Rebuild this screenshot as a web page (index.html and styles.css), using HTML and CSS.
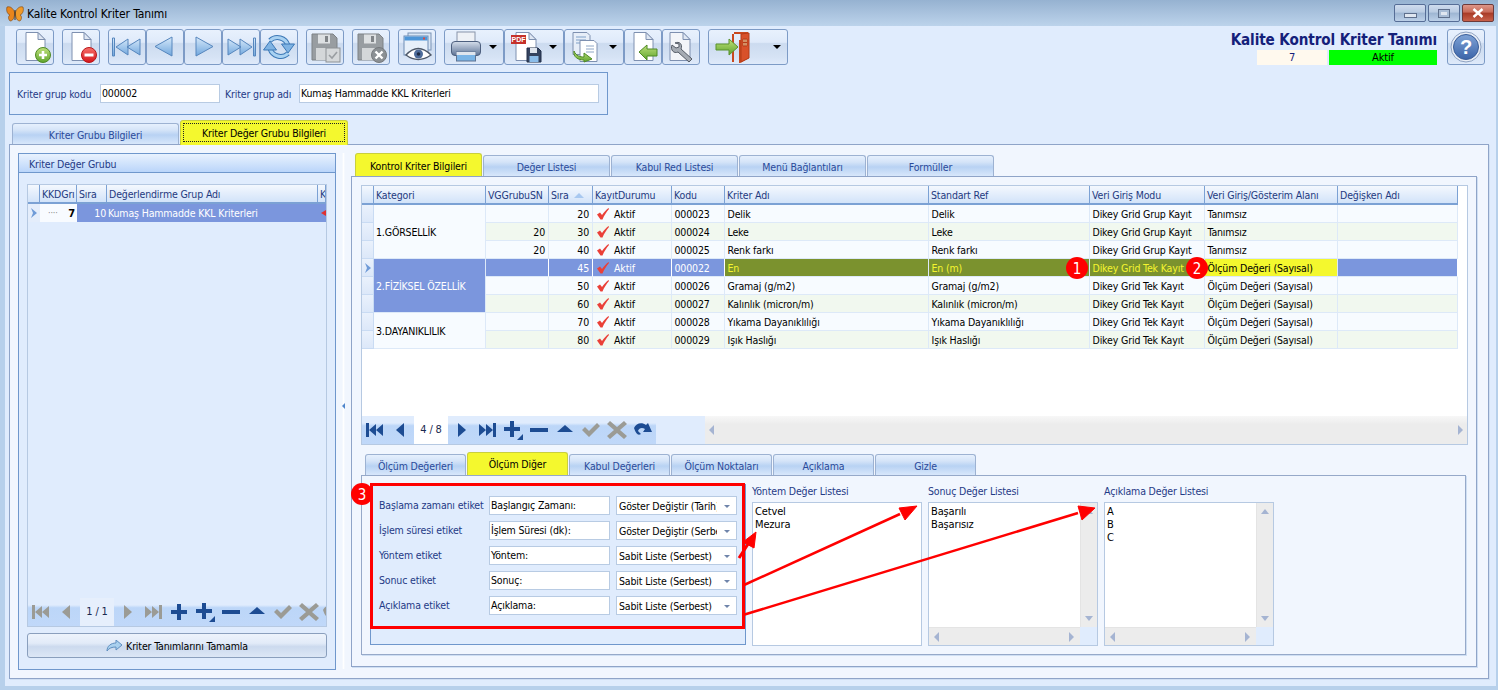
FILE: index.html
```html
<!DOCTYPE html>
<html lang="tr">
<head>
<meta charset="utf-8">
<title>Kalite Kontrol Kriter Tanımı</title>
<link rel="stylesheet" href="styles.css">
</head>
<body>
<svg class="defs" width="0" height="0">
  <defs>
    <linearGradient id="gblue" x1="0" y1="0" x2="0" y2="1"><stop offset="0" stop-color="#d7e9fa"/><stop offset="1" stop-color="#6fa6dd"/></linearGradient>
    <linearGradient id="ggreen" x1="0" y1="0" x2="0" y2="1"><stop offset="0" stop-color="#bfe07a"/><stop offset="1" stop-color="#5fa52e"/></linearGradient>
    <linearGradient id="gred" x1="0" y1="0" x2="0" y2="1"><stop offset="0" stop-color="#f8706a"/><stop offset="1" stop-color="#d4141a"/></linearGradient>
    <linearGradient id="ghelp" x1="0" y1="0" x2="0" y2="1"><stop offset="0" stop-color="#7fa3d6"/><stop offset="1" stop-color="#3b64a8"/></linearGradient>
    <linearGradient id="gprint" x1="0" y1="0" x2="0" y2="1"><stop offset="0" stop-color="#d5deeb"/><stop offset="1" stop-color="#5d7396"/></linearGradient>
    <symbol id="doc" viewBox="0 0 32 32"><path d="M7 1.500h12l7 7v21H7z" fill="#fff" stroke="#7e90b0"/><path d="M19 1.500v7h7z" fill="#dfe7f3" stroke="#7e90b0"/></symbol>
    <symbol id="i-new" viewBox="0 0 32 32"><use href="#doc"/><circle cx="24" cy="24" r="7.500" fill="url(#ggreen)" stroke="#4f8a24"/><path d="M20 24h8M24 20v8" stroke="#fff" stroke-width="2.600"/></symbol>
    <symbol id="i-del" viewBox="0 0 32 32"><use href="#doc"/><circle cx="24" cy="24" r="7.500" fill="url(#gred)" stroke="#b81418"/><path d="M19.500 24h9" stroke="#fff" stroke-width="3"/></symbol>
    <symbol id="i-first" viewBox="0 0 32 32"><path d="M1.500 7h2v18h-2zM5 16L17 8v16zM16 16L29 8v16z" fill="url(#gblue)" stroke="#5686bd"/></symbol>
    <symbol id="i-prev" viewBox="0 0 32 32"><path d="M6 15.500L23 6v19z" fill="url(#gblue)" stroke="#5686bd"/></symbol>
    <symbol id="i-next" viewBox="0 0 32 32"><path d="M26 15.500L9 6v19z" fill="url(#gblue)" stroke="#5686bd"/></symbol>
    <symbol id="i-last" viewBox="0 0 32 32"><path d="M30.500 7h-2v18h2zM27 16L15 8v16zM16 16L3 8v16z" fill="url(#gblue)" stroke="#5686bd"/></symbol>
    <symbol id="i-refresh" viewBox="0 0 32 32"><g id="rf"><path d="M7 9.500a11 11 0 0 1 18 5" fill="none" stroke="#3c78b6" stroke-width="5"/><path d="M7 9.500a11 11 0 0 1 18 5" fill="none" stroke="#a9d2f2" stroke-width="3"/><path d="M18.500 13h13L25 22z" fill="#7fb3e3" stroke="#3c78b6"/></g><use href="#rf" transform="rotate(180 16 16)"/></symbol>
    <symbol id="floppy" viewBox="0 0 32 32"><path d="M3 3h21l4 4v22H3z" fill="#989da1" stroke="#7d8185"/><rect x="9" y="3.500" width="12" height="9" fill="#dde0e2"/><rect x="16" y="5" width="3" height="6" fill="#808488"/><rect x="7" y="17" width="17" height="12" fill="#d4d7d9"/></symbol>
    <symbol id="i-savecheck" viewBox="0 0 32 32"><use href="#floppy"/><rect x="17" y="17" width="14" height="14" fill="#d5d8da" stroke="#8d9296"/><path d="M20 24l3 3 5-6" fill="none" stroke="#9a9ea2" stroke-width="1.600"/></symbol>
    <symbol id="i-savex" viewBox="0 0 32 32"><use href="#floppy"/><circle cx="24" cy="24" r="7.500" fill="#8b9094" stroke="#75797d"/><path d="M20.500 20.500l7 7M27.500 20.500l-7 7" stroke="#fff" stroke-width="2.400"/></symbol>
    <symbol id="i-preview" viewBox="0 0 32 32"><rect x="7" y="2" width="23" height="17" fill="#d8e6f5" stroke="#7b93b5"/><rect x="3" y="5" width="24" height="19" fill="#e7f0fa" stroke="#6f8cb3"/><rect x="3.500" y="5.500" width="23" height="4" fill="#4e96d8"/><rect x="22" y="6.500" width="2" height="2" fill="#e14a3c"/><path d="M5 24Q17 11 30 24Q17 33 5 24z" fill="#fff" stroke="#4d5868" stroke-width="1.400"/><circle cx="17.500" cy="23" r="4.500" fill="#4e6c9a"/><circle cx="17.500" cy="23" r="1.800" fill="#1f2c44"/></symbol>
    <symbol id="i-print" viewBox="0 0 32 32"><rect x="7" y="1" width="18" height="11" fill="#eef1f6" stroke="#8894aa"/><rect x="1.500" y="10.500" width="29" height="14" rx="3.500" fill="url(#gprint)" stroke="#4d5f7e"/><rect x="6.500" y="21" width="19" height="9" fill="#7ab4e6" stroke="#5f7392"/><rect x="6.500" y="21" width="19" height="3" fill="#dfe5ee"/></symbol>
    <symbol id="i-pdf" viewBox="0 0 32 32"><path d="M6 1.500h13l7 7v21H6z" fill="#fff" stroke="#7e90b0"/><path d="M19 1.500v7h7z" fill="#dfe7f3" stroke="#7e90b0"/><rect x="1" y="4" width="15" height="9" fill="#c5312a"/><text x="8.500" y="11.200" class="pdf-t">PDF</text><path d="M17 17h11l3 3v11H17z" fill="#34435f" stroke="#22304a"/><rect x="20" y="17" width="7" height="5" fill="#dfe5ee"/><rect x="19.500" y="25" width="9" height="6" fill="#8bbdea"/></symbol>
    <symbol id="i-copy" viewBox="0 0 32 32"><path d="M3 1.500h14l3 3v19H3z" fill="#e7eef8" stroke="#7e90b0"/><path d="M6 6h10M6 9h10M6 12h10" stroke="#7fa0c8"/><path d="M10 9.500h14l3 3v18H10z" fill="#fff" stroke="#7e90b0"/><path d="M16 15h8M16 18h8M16 21h8" stroke="#8ea6c6"/><path d="M4 20c2 5 6 6 10 6v-4l8 6-8 3v-2c-6 0-11-3-10-9z" fill="url(#ggreen)" stroke="#4f8a24"/></symbol>
    <symbol id="i-back" viewBox="0 0 32 32"><use href="#doc"/><path d="M12 21l8-7v4h10v7H20v4z" fill="url(#ggreen)" stroke="#4f8a24"/></symbol>
    <symbol id="i-tool" viewBox="0 0 32 32"><path d="M5 1.500h13l7 7v21H5z" fill="#f3f5f9" stroke="#7e90b0"/><path d="M18 1.500v7h7z" fill="#dfe7f3" stroke="#7e90b0"/><path d="M10 12c4-2 8 1 6 6l11 10-3 3-11-10c-4 2-8-2-6-7l4 3 3-1 0-3z" fill="#a5abb3" stroke="#545b66"/></symbol>
    <symbol id="i-exit" viewBox="0 0 40 32"><path d="M20 2h13v25l-7 4V9" fill="none" stroke="#c9481f" stroke-width="2"/><path d="M27 3l8-1v25l-8 4z" fill="#d8512a" stroke="#b43c18"/><path d="M29 8h4v7h-4z" fill="#f2e3b0" stroke="#b43c18"/><path d="M31 8v7M29 11.500h4" stroke="#b43c18"/><path d="M19 31V3" stroke="#c9481f" stroke-width="2"/><path d="M2 13h13V8l9 8-9 8v-5H2z" fill="url(#ggreen)" stroke="#5a932f"/></symbol>
    <symbol id="i-help" viewBox="0 0 32 32"><circle cx="16" cy="16" r="15" fill="#e9eef6" stroke="#8ea2c2"/><circle cx="16" cy="16" r="12.500" fill="url(#ghelp)" stroke="#3a5d98"/><text x="16" y="23" class="help-t">?</text></symbol>
    <symbol id="i-check" viewBox="0 0 12 12"><path d="M0 6.500L3 4.500 5 7C7 4 9 2 11.500 0L12 1C9.500 4 7 7.500 5.500 11.500H3.500z" fill="#ea4038"/></symbol>
    <symbol id="n-first" viewBox="0 0 20 20"><path d="M1 3h3v14H1zM4 10l7-6v12zM11 10l7-6v12z" fill="currentColor"/></symbol>
    <symbol id="n-prev" viewBox="0 0 20 20"><path d="M5 10l8-7v14z" fill="currentColor"/></symbol>
    <symbol id="n-next" viewBox="0 0 20 20"><path d="M15 10L7 3v14z" fill="currentColor"/></symbol>
    <symbol id="n-last" viewBox="0 0 20 20"><path d="M19 3h-3v14h3zM16 10L9 4v12zM9 10L2 4v12z" fill="currentColor"/></symbol>
    <symbol id="n-plus" viewBox="0 0 20 20"><path d="M8 2h4v6h6v4h-6v6H8v-6H2V8h6z" fill="currentColor"/></symbol>
    <symbol id="n-plus2" viewBox="0 0 20 20"><path d="M7 1h4v6h6v4h-6v6H7v-6H1V7h6z" fill="currentColor"/><path d="M20 14v6h-6z" fill="currentColor"/></symbol>
    <symbol id="n-minus" viewBox="0 0 20 20"><rect x="1" y="8" width="18" height="4" fill="currentColor"/></symbol>
    <symbol id="n-up" viewBox="0 0 20 20"><path d="M10 5l8 7H2z" fill="currentColor"/></symbol>
    <symbol id="n-check" viewBox="0 0 20 20"><path d="M1 10l3-3 4 4 8-8 3 3-11 11z" fill="currentColor"/></symbol>
    <symbol id="n-x" viewBox="0 0 20 20"><path d="M3 1l7 6 7-6 3 3-7 6 7 6-3 3-7-6-7 6-3-3 7-6-7-6z" fill="currentColor"/></symbol>
    <symbol id="n-redo" viewBox="0 0 20 20"><path d="M1 8c2-5 8-6 12-3l2-2 4 9h-9l2-3c-3-2-6-1-7 2l3 3c-3 2-5 0-7-6z" fill="currentColor"/></symbol>
  </defs>
</svg>

<div class="window">
  <header class="titlebar">
    <svg class="butterfly" viewBox="0 0 18 16" width="18" height="16"><path d="M8.500 6C7 2 4 0 1 1c-1 3 0 7 3 8-2 1-2 4 0 6 3 0 4-3 4.500-6z" fill="#e8851c" stroke="#7a4310" stroke-width=".6"/><path d="M9.500 6C11 2 14 0 17 1c1 3 0 7-3 8 2 1 2 4 0 6-3 0-4-3-4.500-6z" fill="#f09a28" stroke="#7a4310" stroke-width=".6"/><path d="M9 4v10" stroke="#3d2a12" stroke-width="1"/></svg>
    <span class="title-text">Kalite Kontrol Kriter Tanımı</span>
    <div class="winbtns">
      <div class="winbtn"><span class="g-min"></span></div>
      <div class="winbtn"><span class="g-max"></span></div>
      <div class="winbtn close"><svg viewBox="0 0 12 10" width="12" height="10"><path d="M1.500 1l9 8M10.500 1l-9 8" stroke="#fff" stroke-width="2.400"/></svg></div>
    </div>
  </header>

  <main class="client">
    <div class="toolbar">
      <div class="tb gap"><svg class="ico"><use href="#i-new"/></svg></div>
      <div class="tb gap"><svg class="ico"><use href="#i-del"/></svg></div>
      <div class="tb"><svg class="ico"><use href="#i-first"/></svg></div>
      <div class="tb"><svg class="ico"><use href="#i-prev"/></svg></div>
      <div class="tb"><svg class="ico"><use href="#i-next"/></svg></div>
      <div class="tb"><svg class="ico"><use href="#i-last"/></svg></div>
      <div class="tb gap"><svg class="ico"><use href="#i-refresh"/></svg></div>
      <div class="tb gap"><svg class="ico"><use href="#i-savecheck"/></svg></div>
      <div class="tb gap"><svg class="ico"><use href="#i-savex"/></svg></div>
      <div class="tb gap"><svg class="ico"><use href="#i-preview"/></svg></div>
      <div class="tb drop"><svg class="ico"><use href="#i-print"/></svg><span class="caret"></span></div>
      <div class="tb drop"><svg class="ico"><use href="#i-pdf"/></svg><span class="caret"></span></div>
      <div class="tb drop"><svg class="ico"><use href="#i-copy"/></svg><span class="caret"></span></div>
      <div class="tb"><svg class="ico"><use href="#i-back"/></svg></div>
      <div class="tb gap"><svg class="ico"><use href="#i-tool"/></svg></div>
      <div class="tb drop wide"><svg class="ico exit"><use href="#i-exit"/></svg><span class="caret"></span></div>
      <div class="form-head">
        <div class="form-title">Kalite Kontrol Kriter Tanımı</div>
        <div class="status"><span class="st-num">7</span><span class="st-act">Aktif</span></div>
      </div>
      <div class="tb help"><svg class="ico"><use href="#i-help"/></svg></div>
    </div>

    <section class="groupbox">
      <label class="lbl">Kriter grup kodu</label>
      <div class="inp w120">000002</div>
      <label class="lbl l2">Kriter grup adı</label>
      <div class="inp w300">Kumaş Hammadde KKL Kriterleri</div>
    </section>

    <nav class="tabs tabs-outer">
      <div class="tab">Kriter Grubu Bilgileri</div>
      <div class="tab on"><span class="focus">Kriter Değer Grubu Bilgileri</span></div>
    </nav>

    <div class="outer-panel">
      <aside class="left-panel">
        <div class="lp-head">Kriter Değer Grubu</div>
        <div class="lp-body">
          <div class="lgrid">
            <div class="lrow lhead">
              <div class="lc-ind hc"></div><div class="lc-a hc">KKDGrı</div><div class="lc-b hc">Sıra</div><div class="lc-c hc">Değerlendirme Grup Adı</div><div class="lc-d hc">K</div>
            </div>
            <div class="lrow lsel">
              <div class="lc-ind ind-sel"><svg width="8" height="10" viewBox="0 0 8 10"><path d="M1 0l6 5-6 5 2-5z" fill="#6f9bd8"/></svg></div>
              <div class="lc-a key"><span class="dots">····</span><b>7</b></div>
              <div class="lc-b num">10</div>
              <div class="lc-c">Kumaş Hammadde KKL Kriterleri</div>
              <div class="lc-d red-tip"></div>
            </div>
            <div class="lfill"></div>
            <div class="navbar small">
              <div class="slot off"><svg><use href="#n-first"/></svg></div>
              <div class="slot off"><svg><use href="#n-prev"/></svg></div>
              <div class="pager pale">1 / 1</div>
              <div class="slot off"><svg><use href="#n-next"/></svg></div>
              <div class="slot off"><svg><use href="#n-last"/></svg></div>
              <div class="slot"><svg><use href="#n-plus"/></svg></div>
              <div class="slot"><svg><use href="#n-plus2"/></svg></div>
              <div class="slot"><svg><use href="#n-minus"/></svg></div>
              <div class="slot"><svg><use href="#n-up"/></svg></div>
              <div class="slot off"><svg><use href="#n-check"/></svg></div>
              <div class="slot off"><svg><use href="#n-x"/></svg></div>
              <div class="slot clip off"><svg><use href="#n-redo"/></svg></div>
            </div>
          </div>
          <div class="finish"><svg width="16" height="12" viewBox="0 0 16 12"><path d="M1 11C1 6 5 3 10 3V0l6 5-6 5V7C6 7 3 8 1 11z" fill="#a9d0ee" stroke="#5f8fc0"/></svg>Kriter Tanımlarını Tamamla</div>
        </div>
      </aside>

      <div class="splitter"><span class="split-arrow"></span></div>

      <div class="right-side">
        <nav class="tabs tabs-r">
          <div class="tab on">Kontrol Kriter Bilgileri</div>
          <div class="tab">Değer Listesi</div>
          <div class="tab">Kabul Red Listesi</div>
          <div class="tab">Menü Bağlantıları</div>
          <div class="tab">Formüller</div>
        </nav>
        <div class="right-panel">
          <div class="mgrid">
            <div class="table">
              <div class="hc ind"></div><div class="hc">Kategori</div><div class="hc">VGGrubuSN</div><div class="hc sorted">Sıra<span class="sort"></span></div><div class="hc">KayıtDurumu</div><div class="hc">Kodu</div><div class="hc">Kriter Adı</div><div class="hc">Standart Ref</div><div class="hc">Veri Giriş Modu</div><div class="hc">Veri Giriş/Gösterim Alanı</div><div class="hc">Değişken Adı</div>

              <div class="ind cell-i"></div><div class="cat span3">1.GÖRSELLİK</div><div class="d"></div><div class="d num">20</div><div class="d kd"><svg><use href="#i-check"/></svg>Aktif</div><div class="d">000023</div><div class="d">Delik</div><div class="d">Delik</div><div class="d">Dikey Grid Grup Kayıt</div><div class="d">Tanımsız</div><div class="d"></div>
              <div class="ind cell-i"></div><div class="e num">20</div><div class="e num">30</div><div class="e kd"><svg><use href="#i-check"/></svg>Aktif</div><div class="e">000024</div><div class="e">Leke</div><div class="e">Leke</div><div class="e">Dikey Grid Grup Kayıt</div><div class="e">Tanımsız</div><div class="e"></div>
              <div class="ind cell-i"></div><div class="d num">20</div><div class="d num">40</div><div class="d kd"><svg><use href="#i-check"/></svg>Aktif</div><div class="d">000025</div><div class="d">Renk farkı</div><div class="d">Renk farkı</div><div class="d">Dikey Grid Grup Kayıt</div><div class="d">Tanımsız</div><div class="d"></div>

              <div class="ind cell-i sel-ind"><svg width="8" height="10" viewBox="0 0 8 10"><path d="M1 0l6 5-6 5 2-5z" fill="#6f9bd8"/></svg></div><div class="cat span3 cat-sel">2.FİZİKSEL ÖZELLİK</div><div class="s"></div><div class="s num">45</div><div class="s kd"><svg><use href="#i-check"/></svg>Aktif</div><div class="s">000022</div><div class="o">En</div><div class="o">En (m)</div><div class="o">Dikey Grid Tek Kayıt</div><div class="y">Ölçüm Değeri (Sayısal)</div><div class="s"></div>
              <div class="ind cell-i"></div><div class="d"></div><div class="d num">50</div><div class="d kd"><svg><use href="#i-check"/></svg>Aktif</div><div class="d">000026</div><div class="d">Gramaj (g/m2)</div><div class="d">Gramaj (g/m2)</div><div class="d">Dikey Grid Tek Kayıt</div><div class="d">Ölçüm Değeri (Sayısal)</div><div class="d"></div>
              <div class="ind cell-i"></div><div class="e"></div><div class="e num">60</div><div class="e kd"><svg><use href="#i-check"/></svg>Aktif</div><div class="e">000027</div><div class="e">Kalınlık (micron/m)</div><div class="e">Kalınlık (micron/m)</div><div class="e">Dikey Grid Tek Kayıt</div><div class="e">Ölçüm Değeri (Sayısal)</div><div class="e"></div>

              <div class="ind cell-i"></div><div class="cat span2">3.DAYANIKLILIK</div><div class="d"></div><div class="d num">70</div><div class="d kd"><svg><use href="#i-check"/></svg>Aktif</div><div class="d">000028</div><div class="d">Yıkama Dayanıklılığı</div><div class="d">Yıkama Dayanıklılığı</div><div class="d">Dikey Grid Tek Kayıt</div><div class="d">Ölçüm Değeri (Sayısal)</div><div class="d"></div>
              <div class="ind cell-i"></div><div class="e"></div><div class="e num">80</div><div class="e kd"><svg><use href="#i-check"/></svg>Aktif</div><div class="e">000029</div><div class="e">Işık Haslığı</div><div class="e">Işık Haslığı</div><div class="e">Dikey Grid Tek Kayıt</div><div class="e">Ölçüm Değeri (Sayısal)</div><div class="e"></div>
            </div>
            <div class="navbar main">
              <div class="slot"><svg><use href="#n-first"/></svg></div>
              <div class="slot"><svg><use href="#n-prev"/></svg></div>
              <div class="pager">4 / 8</div>
              <div class="slot"><svg><use href="#n-next"/></svg></div>
              <div class="slot"><svg><use href="#n-last"/></svg></div>
              <div class="slot"><svg><use href="#n-plus2"/></svg></div>
              <div class="slot"><svg><use href="#n-minus"/></svg></div>
              <div class="slot"><svg><use href="#n-up"/></svg></div>
              <div class="slot off"><svg><use href="#n-check"/></svg></div>
              <div class="slot off"><svg><use href="#n-x"/></svg></div>
              <div class="slot"><svg><use href="#n-redo"/></svg></div>
              <div class="nav-gap"></div>
              <div class="hscroll"><span class="arr-l"></span><span class="arr-r"></span></div>
            </div>
          </div>

          <nav class="tabs tabs-l">
            <div class="tab">Ölçüm Değerleri</div>
            <div class="tab on">Ölçüm Diğer</div>
            <div class="tab">Kabul Değerleri</div>
            <div class="tab">Ölçüm Noktaları</div>
            <div class="tab">Açıklama</div>
            <div class="tab">Gizle</div>
          </nav>
          <div class="lower-panel">
            <div class="sub-form">
              <label class="lbl">Başlama zamanı etiket</label><div class="inp">Başlangıç Zamanı:</div><div class="combo"><span class="ct">Göster Değiştir (Tarih)</span><span class="cb"></span></div>
              <label class="lbl">İşlem süresi etiket</label><div class="inp">İşlem Süresi (dk):</div><div class="combo"><span class="ct">Göster Değiştir (Serbest)</span><span class="cb"></span></div>
              <label class="lbl">Yöntem etiket</label><div class="inp">Yöntem:</div><div class="combo"><span class="ct">Sabit Liste (Serbest)</span><span class="cb"></span></div>
              <label class="lbl">Sonuc etiket</label><div class="inp">Sonuç:</div><div class="combo"><span class="ct">Sabit Liste (Serbest)</span><span class="cb"></span></div>
              <label class="lbl">Açıklama etiket</label><div class="inp">Açıklama:</div><div class="combo"><span class="ct">Sabit Liste (Serbest)</span><span class="cb"></span></div>
            </div>
            <div class="listcol">
              <div class="lbl list-l">Yöntem Değer Listesi</div>
              <div class="listbox plain"><div class="items">Cetvel<br>Mezura</div></div>
            </div>
            <div class="listcol">
              <div class="lbl list-l">Sonuç Değer Listesi</div>
              <div class="listbox"><div class="items">Başarılı<br>Başarısız</div><div class="vs"><span class="up"></span><span class="dn"></span></div><div class="hs"><span class="arr-l"></span><span class="arr-r"></span></div><div class="corner"></div></div>
            </div>
            <div class="listcol">
              <div class="lbl list-l">Açıklama Değer Listesi</div>
              <div class="listbox"><div class="items">A<br>B<br>C</div><div class="vs"><span class="up"></span><span class="dn"></span></div><div class="hs"><span class="arr-l"></span><span class="arr-r"></span></div><div class="corner"></div></div>
            </div>
          </div>
        </div>
      </div>
    </div>
  </main>
</div>

<svg class="annot" width="1498" height="690" viewBox="0 0 1498 690">
  <rect x="371.500" y="484.500" width="372" height="143" fill="none" stroke="#f00" stroke-width="3"/>
  <g fill="#f00" stroke="#f00">
    <path d="M739 558L750 541" stroke-width="3"/><path d="M756 532L754 548 743 542z"/>
    <path d="M744 585L900 514" stroke-width="2.500"/><path d="M917 506L905 520 899 508z"/>
    <path d="M743 615L1078 513" stroke-width="2.500"/><path d="M1095 508L1082 520 1078 506z"/>
  </g>
  <g class="badge">
    <circle cx="1077" cy="268" r="11" fill="#f00"/><text x="1077" y="273.500">1</text>
    <circle cx="1197" cy="268" r="11" fill="#f00"/><text x="1197" y="273.500">2</text>
    <circle cx="362" cy="494" r="11" fill="#f00"/><text x="362" y="499.500">3</text>
  </g>
</svg>
</body>
</html>
```
FILE: styles.css
```css
* { box-sizing: border-box; }
html, body { margin: 0; height: 100%; }
body {
  position: relative;
  width: 1498px;
  height: 690px;
  overflow: hidden;
  background: #b7d0eb;
  color: #000;
  font: 10.5px/14px "DejaVu Sans Condensed", "DejaVu Sans", sans-serif;
  letter-spacing: -0.15px;
}
.defs { position: absolute; }
.pdf-t { font: bold 7px "Liberation Sans", sans-serif; fill: #fff; text-anchor: middle; letter-spacing: 0; }
.help-t { font: bold 20px "Liberation Sans", sans-serif; fill: #fff; text-anchor: middle; }

.window { display: flex; flex-direction: column; height: 690px; }

.titlebar {
  display: flex; align-items: center; height: 26px; flex: none;
  padding: 2px 4px 0 6px;
  background: linear-gradient(#96b2d1, #bcd3eb);
}
.butterfly { flex: none; }
.title-text { margin-left: 3px; font-size: 12px; letter-spacing: -0.1px; }
.winbtns { display: flex; gap: 2px; margin-left: auto; margin-top: -2px; }
.winbtn {
  width: 32px; height: 18px; display: flex; align-items: center; justify-content: center;
  border: 1px solid #566d96; border-radius: 2px;
  background: linear-gradient(#cfdcee, #b9cbe2 45%, #9db5d2 50%, #bcd0e8);
}
.winbtn.close { background: linear-gradient(#dd9689, #c86a58 45%, #a83a26 50%, #c8604a); border-color: #6d3a3a; }
.g-min { width: 13px; height: 5px; background: #dfe6f0; border: 1px solid #5e6f8c; margin-top: 4px; }
.g-max { width: 12px; height: 9px; border: 1px solid #5e6f8c; background: #dfe6f0; box-shadow: inset 0 0 0 2px #a9bdd6; }

.client { width: 1491px; height: 660px; margin-left: 5px; background: #e0ecfd; }

.toolbar { display: flex; align-items: flex-start; height: 39px; padding: 3px 11px 0 11px; }
.tb {
  flex: none; width: 38px; height: 36px;
  display: flex; align-items: center; justify-content: center;
  border: 1.5px solid #7d9bc6; border-radius: 3px;
  background: linear-gradient(#e8f1fd, #dfeafa 36%, #ccdbef 40%, #d6e3f5 80%, #dfeafa);
}
.tb.gap { margin-right: 8px; }
.tb.drop { width: 60px; justify-content: flex-start; padding-left: 5px; }
.tb.wide { width: 80px; }
.tb.help { margin-left: 10px; }
.ico { width: 32px; height: 32px; flex: none; }
.ico.exit { width: 40px; }
.caret {
  width: 0; height: 0; margin-left: auto; margin-right: 6px;
  border-left: 4px solid transparent; border-right: 4px solid transparent; border-top: 4px solid #000;
}
.form-head { margin-left: auto; display: flex; flex-direction: column; align-items: flex-end; }
.form-title {
  height: 21px; font: bold 15.100px/22px "DejaVu Sans Condensed", "DejaVu Sans", sans-serif;
  color: #14207a; letter-spacing: -0.1px;
}
.status { display: flex; gap: 2px; height: 15px; line-height: 15px; text-align: center; font-size: 11px; }
.st-num { width: 70px; background: #fff9ee; color: #14207a; }
.st-act { width: 108px; background: #00ff00; }

.groupbox {
  display: flex; align-items: center;
  width: 599px; height: 43px; margin: 7px 0 0 4px; padding: 0 0 0 7px;
  border: 1px solid #6f97cc;
}
.lbl { color: #1f3a86; white-space: nowrap; }
.groupbox .lbl { width: 83px; flex: none; }
.groupbox .l2 { width: 74px; margin-left: 5px; }
.inp {
  height: 19px; line-height: 17px; padding: 0 1px;
  background: #fff; border: 1px solid #b8cbe3; white-space: nowrap; overflow: hidden;
}
.w120 { width: 120px; flex: none; }
.w300 { width: 300px; flex: none; }

.tabs { display: flex; align-items: flex-end; }
.tab {
  flex: none; height: 21px; padding-top: 2px; display: flex; align-items: center; justify-content: center;
  color: #2a4a9a; white-space: nowrap;
  border: 1px solid #9db2d2; border-bottom: 0; border-radius: 3px 3px 0 0;
  background: linear-gradient(#e6f0fd, #d5e4f8 30%, #b8d2f3 55%, #d8e7fb);
}
.tab.on { background: #f4f82e; color: #000; border-color: #c9cf3e; border-width: 1px 1px 0; }
.tabs-outer { height: 29px; padding: 5px 0 0 7px; gap: 1px; }
.tabs-outer .tab { width: 167px; }
.tabs-outer .tab.on { height: 25px; width: 168px; padding: 2px 2px 3px; position: relative; z-index: 2; margin-bottom: -1px; }
.focus { width: 100%; height: 100%; padding-top: 1px; display: flex; align-items: center; justify-content: center; border: 1px dotted #222; }
.tabs-r { height: 23px; padding-left: 4px; gap: 1px; }
.tabs-r .tab { width: 127px; }
.tabs-r .tab.on { height: 23px; }
.tabs-l { height: 23px; margin-top: 7px; padding-left: 4px; gap: 1px; }
.tabs-l .tab { width: 101px; }
.tabs-l .tab.on { height: 23px; padding-top: 0; }

.outer-panel {
  display: flex; width: 1480px; height: 535px; margin-left: 4px; padding: 8px 0 0 8px;
  background: #f1f6fe; border: 1px solid #8fa4c8;
  box-shadow: 1px 1px 0 #cfdff3;
}

.left-panel { flex: none; width: 318px; height: 517px; border: 1px solid #6f97cc; background: #e0ecfd; }
.lp-head {
  height: 19px; padding-left: 10px; line-height: 20px; color: #1f3a86;
  background: linear-gradient(#e9f2fe, #bad5fa); border-bottom: 1px solid #6f97cc;
}
.lp-body { padding: 11px 9px 0 8px; }
.lgrid { display: flex; flex-direction: column; width: 300px; height: 443px; border: 1px solid #b6c9e2; }
.lrow { display: flex; flex: none; }
.lhead { height: 19px; }
.hc {
  padding: 0 2px; line-height: 19px; color: #1f3a7f; white-space: nowrap; overflow: hidden;
  background: linear-gradient(#f4f8fe, #d2e3f9);
  border-right: 1px solid #7ba1d4; border-bottom: 2px solid #7ba1d4;
}
.lc-ind { width: 12px; flex: none; }
.lc-a { width: 37px; flex: none; }
.lc-b { width: 30px; flex: none; }
.lc-c { width: 211px; flex: none; white-space: nowrap; padding-left: 1px; }
.lc-d { flex: 1; }
.lhead .lc-c { padding-left: 2px; }
.lsel { height: 18px; line-height: 19px; background: #7b96dd; color: #fff; }
.ind-sel { display: flex; align-items: center; justify-content: center; background: #e4edfb; }
.key { display: flex; justify-content: space-between; align-items: center; padding: 0 2px 0 8px; background: #f8fbff; color: #000; }
.dots { color: #888; font-size: 9px; }
.key b { font-size: 11px; }
.lsel .num { text-align: right; padding-right: 1px; }
.red-tip { position: relative; }
.red-tip::after { content: ""; position: absolute; right: 0; top: 6px; border-right: 5px solid #e03030; border-top: 3px solid transparent; border-bottom: 3px solid transparent; }
.lfill { flex: 1; }

.navbar { display: flex; flex: none; height: 28px; overflow: hidden; color: #1d4c93; background: linear-gradient(#e0ecfd 25%, #bcd6f8 35%, #c0d8f9); }
.slot { flex: none; width: 26px; display: flex; align-items: center; justify-content: center; }
.slot svg { width: 20px; height: 20px; }
.slot.off { color: #9b9b95; }
.slot.clip { width: 6px; justify-content: flex-start; }
.slot.clip svg { flex: none; }
.pager { flex: none; width: 34px; text-align: center; line-height: 28px; background: #fff; color: #1a2a50; font-size: 11px; }
.pager.pale { background: #e6effc; }
.nav-gap { flex: none; width: 49px; background: #e0ecfd; }
.hscroll {
  flex: 1; display: flex; justify-content: space-between; align-items: center; padding: 0 4px;
  background: linear-gradient(#f7f7f7, #ececec 30%);
}
.arr-l { width: 0; height: 0; border-right: 5px solid #a5b4d2; border-top: 5px solid transparent; border-bottom: 5px solid transparent; }
.arr-r { width: 0; height: 0; border-left: 5px solid #a5b4d2; border-top: 5px solid transparent; border-bottom: 5px solid transparent; }

.finish {
  display: flex; align-items: center; justify-content: center; gap: 4px;
  width: 300px; height: 25px; margin-top: 6px;
  border: 1px solid #8a9fbd; border-radius: 3px;
  background: linear-gradient(#edf3fc, #e2ebf8 40%, #ccdaee 55%, #dce7f6);
}

.splitter { flex: none; width: 15px; height: 516px; position: relative; background: linear-gradient(90deg, #f1f6fe 40%, #fff 50%, #f1f6fe 60%); }
.split-arrow { position: absolute; left: 6px; top: 250px; border-right: 3px solid #4f86cc; border-top: 3px solid transparent; border-bottom: 3px solid transparent; }

.right-side { flex: none; width: 1126px; }
.right-panel {
  height: 491px; padding: 8px 0 0 9px;
  background: #f1f6fe; border: 1px solid #8fa4c8;
  box-shadow: 1px 1px 0 #cfdff3;
}

.mgrid { display: flex; flex-direction: column; width: 1107px; height: 260px; border: 1px solid #b6c9e2; background: #fff; }
.table {
  flex: 1; display: grid;
  grid-template-columns: 12px 112px 63px 44px 79px 53px 204px 161px 115px 133px 120px;
  grid-template-rows: 19px repeat(8, 18px);
  align-content: start;
}
.table .hc { padding-left: 2px; line-height: 19px; }
.table .hc.ind { padding: 0; }
.sorted { position: relative; }
.sort { position: absolute; right: 8px; top: 7px; border-left: 5px solid transparent; border-right: 5px solid transparent; border-bottom: 5px solid #a8c8f0; }
.cell-i { background: linear-gradient(#eaf1fc, #dce8f9); border-right: 1px solid #c9dbf3; border-bottom: 1px solid #c9dbf3; }
.sel-ind { display: flex; align-items: center; justify-content: center; }
.cat { padding: 1px 0 0 2px; display: flex; align-items: center; background: #f7fbff; border-right: 1px solid #dde9f8; border-bottom: 1px solid #dde9f8; }
.span3 { grid-row: span 3; }
.span2 { grid-row: span 2; }
.cat-sel { background: #7b96dd; color: #fff; }
.d, .e, .s, .o, .y {
  padding: 1px 3px 0 2.5px; line-height: 16px; white-space: nowrap; overflow: hidden;
  border-right: 1px solid #dde9f8; border-bottom: 1px solid #dde9f8;
}
.d { background: #f7fbff; }
.e { background: #f1f8ef; }
.s { background: #7b96dd; color: #fff; border-right-color: #fff; }
.o { background: #7b922e; color: #f5f52e; }
.y { background: #f4f82e; }
.num { text-align: right; }
.kd { display: flex; align-items: center; padding-left: 4px; }
.kd svg { width: 12px; height: 12px; margin-right: 5px; flex: none; }

.lower-panel {
  display: flex; width: 1105px; height: 180px; padding: 8px 0 0 8px; gap: 6px; align-items: flex-start;
  background: #f1f6fe; border: 1px solid #96a9c9; box-shadow: 1px 1px 0 #cfdff3;
}
.sub-form {
  flex: none; width: 376px; height: 161px; padding: 11px 0 0 8px;
  display: grid; grid-template-columns: 110px 121px 127px; row-gap: 6px;
  grid-auto-rows: 19px; align-items: center;
  background: #e0ecfd; border: 1px solid #6f97cc;
}
.sub-form .combo { margin-left: 6px; width: 121px; }
.sub-form .inp { width: 121px; }
.sub-form .lbl { line-height: 18px; height: 19px; }
.combo { display: flex; align-items: center; height: 19px; background: #fff; border: 1px solid #b8cbe3; padding: 1px 0 0 2px; }
.ct { width: 98px; overflow: hidden; white-space: nowrap; }
.cb { margin-left: 7px; border-left: 3.500px solid transparent; border-right: 3.500px solid transparent; border-top: 3.500px solid #6f84aa; }

.listcol { flex: none; width: 170px; }
.list-l { height: 18px; line-height: 14px; }
.listbox {
  height: 144px; display: grid; grid-template-columns: 1fr 17px; grid-template-rows: 1fr 18px;
  background: #fff; border: 1px solid #b6c9e2;
}
.listbox.plain { display: block; }
.items { padding: 2px; line-height: 13px; font-size: 11px; }
.vs { display: flex; flex-direction: column; justify-content: space-between; align-items: center; padding: 6px 0; background: #ececec; border-left: 1px solid #e4e4e4; }
.up { border-left: 4.500px solid transparent; border-right: 4.500px solid transparent; border-bottom: 5px solid #a5b4d2; }
.dn { border-left: 4.500px solid transparent; border-right: 4.500px solid transparent; border-top: 5px solid #a5b4d2; }
.hs { display: flex; justify-content: space-between; align-items: center; padding: 0 6px 0 5px; background: #ececec; border-top: 1px solid #e4e4e4; }
.corner { background: #e0ecfd; }

.annot { position: absolute; left: 0; top: 0; pointer-events: none; }
.badge text { font: 15px "DejaVu Sans Condensed", "DejaVu Sans", sans-serif; fill: #fff; text-anchor: middle; letter-spacing: 0; }
```
